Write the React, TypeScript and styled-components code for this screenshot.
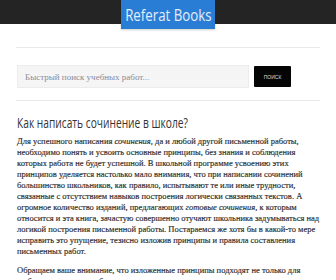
import styled, { createGlobalStyle } from "styled-components";

const GlobalStyle = createGlobalStyle`
  html, body {
    margin: 0;
    padding: 0;
    background: #fff;
    overflow: hidden;
  }
  * { box-sizing: border-box; }
`;

const Page = styled.div`
  width: 336px;
  height: 280px;
  overflow: hidden;
  background: #fff;
`;

const TopBar = styled.header`
  height: 24px;
  background: #242424;
  display: flex;
  justify-content: center;
  margin-bottom: 23px;
`;

const Logo = styled.div`
  width: 94px;
  height: 29px;
  background: #2a7dd4;
  box-shadow: 0 1px 2px rgba(0, 0, 0, 0.2);
  display: flex;
  align-items: center;
  justify-content: center;
  z-index: 1;
`;

// condensed look: no narrow face is installed, so squeeze a regular one
const Narrow = styled.span<{ $w: number }>`
  display: inline-block;
  white-space: nowrap;
  transform: scaleX(${(p) => p.$w});
`;

const LogoText = styled(Narrow)`
  color: #e4eefa;
  font-family: "Open Sans", sans-serif;
  font-size: 17px;
  line-height: 20px;
  transform-origin: center;
`;

const Content = styled.main`
  padding: 0 16px;
`;

const Rule = styled.hr`
  border: 0;
  height: 1px;
  background: #e8e8e8;
  margin: 0;
`;

const SearchRow = styled.form`
  display: flex;
  align-items: center;
  gap: 5px;
  padding: 17px 0 12px 1px;
`;

const SearchInput = styled.input`
  width: 232px;
  height: 23px;
  border: 1px solid #ececec;
  background: #f5f5f6;
  padding: 0 7px;
  font-family: "Liberation Serif", serif;
  font-size: 9px;
  color: #888;
  outline: none;
  &::placeholder { color: #8a8a9a; }
`;

const SearchButton = styled.button`
  width: 37px;
  height: 21px;
  border: 0;
  border-radius: 1px;
  background: #050505;
  color: #ddd;
  font-family: "Liberation Sans", sans-serif;
  font-size: 5px;
  text-transform: uppercase;
  padding: 0;
`;

const Title = styled.h1`
  margin: 12px 0 4px 1px;
  font-weight: 400;
  font-size: 15px;
  line-height: 18px;
`;

const TitleText = styled(Narrow)`
  font-family: "Open Sans", sans-serif;
  color: #333;
  transform-origin: left center;
`;

const Para = styled.p`
  margin: 0 0 8px 1px;
  font-family: "Liberation Serif", serif;
  font-size: 8.5px;
  line-height: 11px;
  color: #262626;
  -webkit-text-stroke: 0.15px #333;
  em { font-style: italic; }
`;

export default function App() {
  return (
    <Page>
      <GlobalStyle />
      <TopBar>
        <Logo>
          <LogoText $w={0.78}>Referat Books</LogoText>
        </Logo>
      </TopBar>
      <Content>
        <Rule />
        <SearchRow onSubmit={(e) => e.preventDefault()}>
          <SearchInput placeholder="Быстрый поиск учебных работ..." />
          <SearchButton type="submit">Поиск</SearchButton>
        </SearchRow>
        <Rule />
        <Title>
          <TitleText $w={0.68}>Как написать сочинение в школе?</TitleText>
        </Title>
        <Para>
          Для успешного написания <em>сочинения</em>, да и любой другой письменной работы,
          необходимо понять и усвоить основные принципы, без знания и соблюдения
          которых работа не будет успешной. В школьной программе усвоению этих
          принципов уделяется настолько мало внимания, что при написании сочинений
          большинство школьников, как правило, испытывают те или иные трудности,
          связанные с отсутствием навыков построения логически связанных текстов.
          А огромное количество изданий, предлагающих <em>готовые сочинения</em>, к которым
          относится и эта книга, зачастую совершенно отучают школьника задумываться над
          логикой построения письменной работы. Постараемся же хотя бы в какой-то мере
          исправить это упущение, тезисно изложив принципы и правила составления
          письменных работ.
        </Para>
        <Para>
          Обращаем ваше внимание, что изложенные принципы подходят не только для
          любых письменных работ, но и для устных ответов на уроках.
        </Para>
      </Content>
    </Page>
  );
}
